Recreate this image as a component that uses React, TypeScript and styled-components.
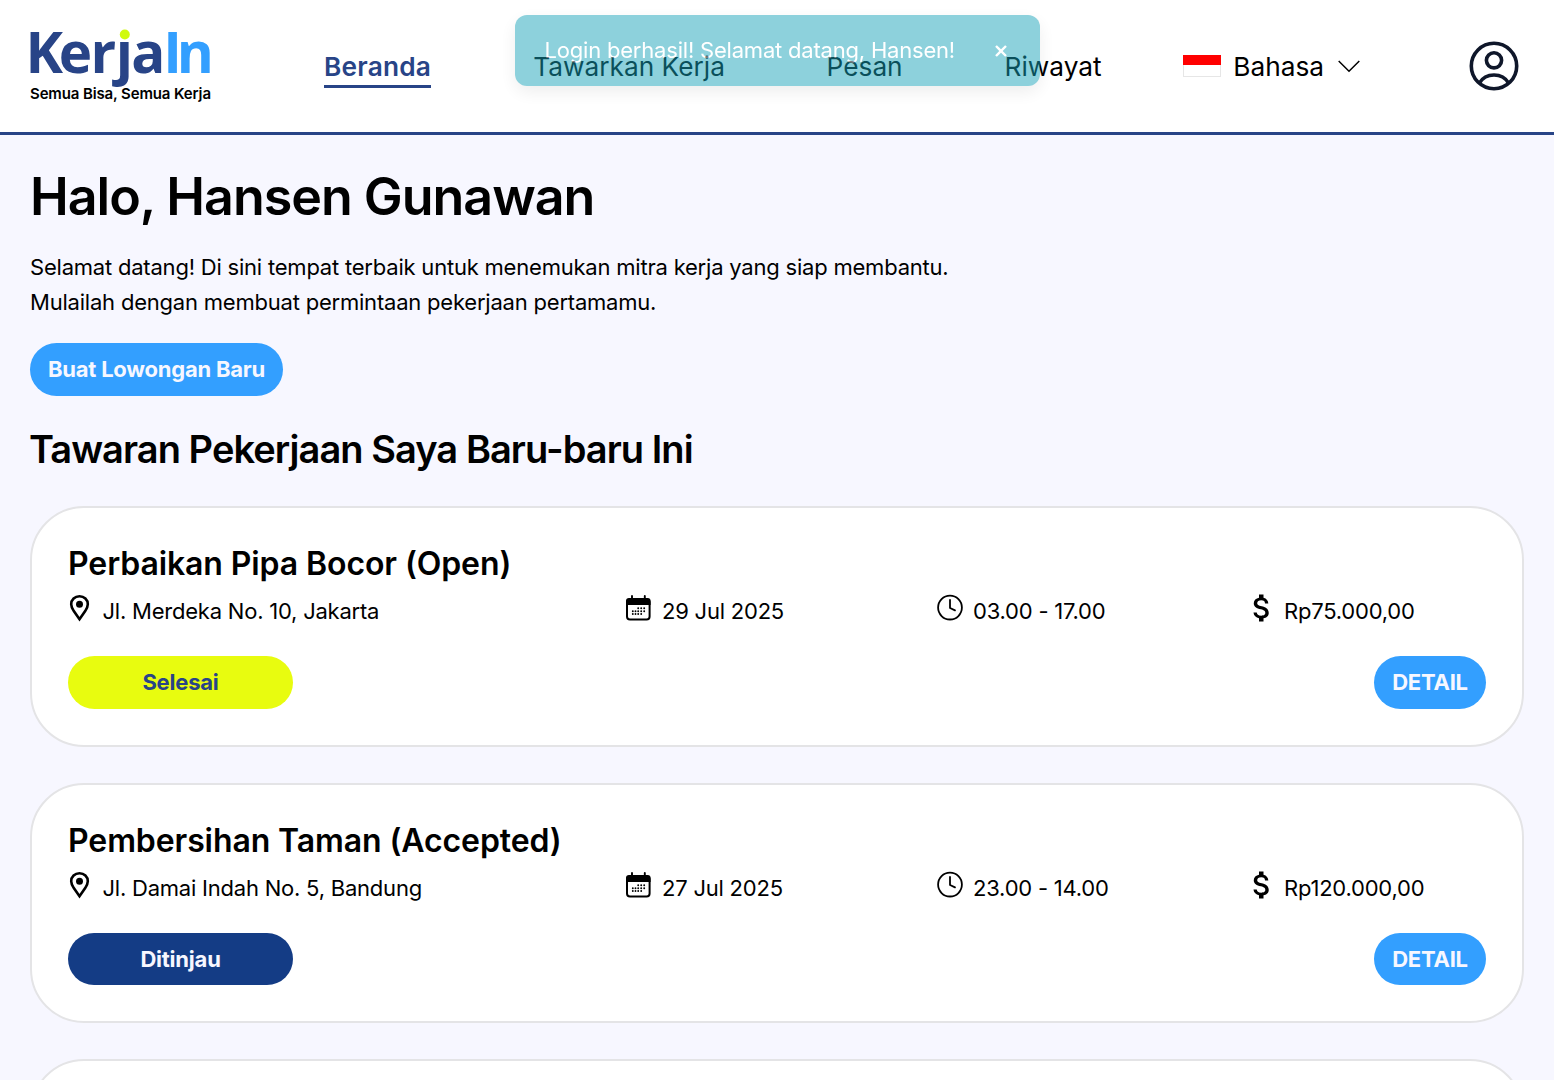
import React from "react";
import styled, { createGlobalStyle } from "styled-components";
import { MdAttachMoney } from "react-icons/md";

const GlobalStyle = createGlobalStyle`
  *, *::before, *::after { box-sizing: border-box; }
  html, body { margin: 0; padding: 0; }
  body {
    height: 1080px;
    overflow: hidden;
    background: #f7f7ff;
    color: #000;
    font-family: Inter, sans-serif;
  }
  h1, h2, h3, p { margin: 0; }
  button { border: 0; cursor: pointer; font-family: inherit; }
`;

const Page = styled.div`
  height: 1080px;
  overflow: hidden;
  background: #f7f7ff;
`;

const Header = styled.header`
  display: flex;
  align-items: center;
  height: 135px;
  padding: 0 35px 0 20px;
  background: #fff;
  border-bottom: 3px solid #284487;
`;

const Logo = styled.svg`
  display: block;
  flex: none;
  width: 202px;
  height: 110px;
  margin-right: 102px;
`;

const Nav = styled.nav`
  display: flex;
  gap: 102.3px;
`;

const NavLink = styled.a<{ $active?: boolean; $width: number }>`
  width: ${(p) => p.$width}px;
  height: 43px;
  margin-top: 1px;
  font-size: 26.25px;
  line-height: 44px;
  letter-spacing: ${(p) => (p.$active ? "0.22px" : "0")};
  white-space: nowrap;
  font-weight: ${(p) => (p.$active ? 600 : 400)};
  color: ${(p) => (p.$active ? "#284487" : "#000")};
  border-bottom: 3px solid ${(p) => (p.$active ? "#284487" : "transparent")};
`;

const Language = styled.div`
  display: flex;
  align-items: center;
  margin-left: 81px;
  font-size: 26.25px;
`;

const Flag = styled.span`
  width: 38px;
  height: 22px;
  margin-right: 12px;
  border: solid #e6e6e6;
  border-width: 0 1px 1px;
  border-image: linear-gradient(#f00 50%, #e6e6e6 50%) 1;
  background: linear-gradient(#f00 50%, #fff 50%);
`;

const Chevron = styled.svg`
  width: 22px;
  height: 13px;
  margin-left: 14px;
`;

const Avatar = styled.svg`
  width: 50px;
  height: 50px;
  margin-left: auto;
`;

const Toast = styled.div`
  position: fixed;
  top: 15px;
  left: 515px;
  display: flex;
  justify-content: space-between;
  align-items: center;
  width: 525px;
  height: 71px;
  padding: 0 31px 0 29.5px;
  border-radius: 12px;
  background: #17a2b8;
  box-shadow: 0 6px 18px rgba(0, 0, 0, 0.15);
  color: #fff;
  font-size: 22px;
  letter-spacing: -0.2px;
  white-space: nowrap;
  opacity: 0.49;
`;

const ToastText = styled.span`
  padding-bottom: 2px;
`;

const CloseIcon = styled.svg`
  width: 16px;
  height: 16px;
`;

const Main = styled.main`
  display: flex;
  flex-direction: column;
  align-items: flex-start;
  padding: 26px 30px 0;
`;

const Greeting = styled.h1`
  height: 72px;
  font-size: 52px;
  line-height: 72px;
  font-weight: 600;
  letter-spacing: -1.03px;
  white-space: nowrap;
`;

const Intro = styled.p`
  margin-top: 17px;
  font-size: 22px;
  line-height: 35px;
  letter-spacing: -0.21px;
  white-space: nowrap;
`;

const SectionTitle = styled.h2`
  height: 56px;
  margin: 25px 0 29.5px;
  font-size: 38px;
  line-height: 56px;
  font-weight: 600;
  letter-spacing: -0.94px;
  text-indent: -1px;
  white-space: nowrap;
`;

const Button = styled.button<{ $width: number; $bg?: string; $fg?: string }>`
  width: ${(p) => p.$width}px;
  height: 52.5px;
  padding: 0;
  border-radius: 27px;
  background: ${(p) => p.$bg ?? "#339fff"};
  color: ${(p) => p.$fg ?? "#f7f7ff"};
  font-size: 22px;
  font-weight: 700;
  letter-spacing: -0.22px;
  white-space: nowrap;
`;

const CreateButton = styled(Button)`
  margin-top: 23px;
`;

const CardList = styled.section`
  display: flex;
  flex-direction: column;
  align-self: stretch;
  gap: 36px;
`;

const Card = styled.article`
  height: 240.5px;
  padding: 36px;
  border: 2px solid #e4e4e6;
  border-radius: 54px;
  background: #fff;
`;

const CardTitle = styled.h3`
  height: 41px;
  font-size: 32px;
  line-height: 40px;
  font-weight: 600;
  letter-spacing: -0.1px;
  white-space: nowrap;
`;

const MetaRow = styled.div`
  display: grid;
  grid-template-columns: 557px 312px 314px 1fr;
  height: 47px;
  padding-top: 8px;
`;

const MetaItem = styled.div<{ $gap?: number }>`
  display: flex;
  gap: ${(p) => p.$gap ?? 10}px;
  height: 34px;
  font-size: 22px;
  line-height: 37.8px;
  letter-spacing: -0.22px;
  white-space: nowrap;
`;

const MetaIcon = styled.svg<{ $width?: number }>`
  flex: none;
  width: ${(p) => p.$width ?? 27}px;
  height: 28px;
  margin-top: 1.4px;
`;

const MoneyBox = styled.span`
  display: flex;
  justify-content: center;
  width: 22px;
  margin-top: -3px;
  height: 36px;
  svg { flex: none; width: 36px; height: 36px; }
`;

const CardActions = styled.div`
  display: flex;
  justify-content: space-between;
  margin-top: 24px;
`;

function PinIcon() {
  return (
    <MetaIcon $width={24} viewBox="0 0 24 28">
      <path d="M11.5 2.2c-4.7 0-8.3 3.4-8.3 8 0 2.7 1.2 4.7 2.6 6.9l5.7 8.2 5.7-8.2c1.4-2.2 2.6-4.2 2.6-6.9 0-4.6-3.6-8-8.3-8Z" fill="none" stroke="#000" strokeWidth="2.6" />
      <circle cx="11.5" cy="10.2" r="3.5" />
    </MetaIcon>
  );
}

const calendarDots = [
  [13.2, 14.3], [16.2, 14.3], [19.2, 14.3],
  [7.8, 17.2], [10.5, 17.2], [13.2, 17.2], [16.2, 17.2], [19.2, 17.2],
  [7.8, 20], [10.5, 20], [13.2, 20], [16.2, 20],
];

function CalendarIcon() {
  return (
    <MetaIcon viewBox="0 0 27 28">
      <rect x="2" y="5.5" width="22.6" height="20" rx="3" fill="none" stroke="#000" strokeWidth="2" />
      <path d="M1 11V6.9a3 3 0 0 1 3-3h18.6a3 3 0 0 1 3 3V11Z" />
      <path d="M7 2v3.5M19.8 2v3.5" stroke="#000" strokeWidth="1.9" strokeLinecap="round" />
      {calendarDots.map(([x, y]) => <circle key={`${x}-${y}`} cx={x} cy={y} r="0.95" />)}
    </MetaIcon>
  );
}

function ClockIcon() {
  return (
    <MetaIcon viewBox="0 0 27 28">
      <circle cx="13" cy="13.6" r="11.9" fill="none" stroke="#000" strokeWidth="1.8" />
      <path d="M13 6v8l5 2.4" fill="none" stroke="#000" strokeWidth="1.8" strokeLinecap="round" strokeLinejoin="round" />
    </MetaIcon>
  );
}

interface Job {
  title: string;
  place: string;
  date: string;
  time: string;
  price: string;
  status: string;
  bg: string;
  fg: string;
}

const jobs: Job[] = [
  { title: "Perbaikan Pipa Bocor (Open)", place: "Jl. Merdeka No. 10, Jakarta", date: "29 Jul 2025", time: "03.00 - 17.00", price: "Rp75.000,00", status: "Selesai", bg: "#e8fc0f", fg: "#284487" },
  { title: "Pembersihan Taman (Accepted)", place: "Jl. Damai Indah No. 5, Bandung", date: "27 Jul 2025", time: "23.00 - 14.00", price: "Rp120.000,00", status: "Ditinjau", bg: "#143c85", fg: "#f7f7ff" },
];

function JobCard({ job }: { job: Job }) {
  return (
    <Card>
      <CardTitle>{job.title}</CardTitle>
      <MetaRow>
        <MetaItem $gap={10.5}><PinIcon />{job.place}</MetaItem>
        <MetaItem><CalendarIcon />{job.date}</MetaItem>
        <MetaItem $gap={9}><ClockIcon />{job.time}</MetaItem>
        <MetaItem $gap={11}><MoneyBox><MdAttachMoney /></MoneyBox>{job.price}</MetaItem>
      </MetaRow>
      <CardActions>
        <Button $width={225} $bg={job.bg} $fg={job.fg}>{job.status}</Button>
        <Button $width={112}>DETAIL</Button>
      </CardActions>
    </Card>
  );
}

export default function App() {
  return (
    <Page>
      <GlobalStyle />
      <Header>
        <Logo viewBox="-10 -15 202 110">
          {/* The j keeps its stem only; its dot is the lime circle. */}
          <clipPath id="stem">
            <path clipRule="evenodd" d="M-10-15H192V95H-10ZM86-2V14.8H104V-2Z" />
          </clipPath>
          <g fontFamily="'Open Sans'" fontWeight="700" fontSize="56.5">
            <text x="-4.6 28.8 60.4 85.8 101.2" y="47.3" fill="#284487" clipPath="url(#stem)">Kerja</text>
            <text x="133.3 146.8" y="47.3" fill="#339fff">In</text>
          </g>
          <circle cx="94.8" cy="8.5" r="5" fill="#d0fa0c" />
          <text x="0" y="73" fontFamily="Inter" fontWeight="600" fontSize="15" textLength="181">Semua Bisa, Semua Kerja</text>
        </Logo>
        <Nav>
          <NavLink $active $width={107}>Beranda</NavLink>
          <NavLink $width={191}>Tawarkan Kerja</NavLink>
          <NavLink $width={75.7}>Pesan</NavLink>
          <NavLink $width={97.7}>Riwayat</NavLink>
        </Nav>
        <Language>
          <Flag />
          Bahasa
          <Chevron viewBox="0 0 22 13" fill="none" stroke="#000" strokeWidth="1.5">
            <path d="M.7 1 11 11.3 21.3 1" />
          </Chevron>
        </Language>
        <Avatar viewBox="0 0 50 50" fill="none" stroke="#0f172a" strokeWidth="3.6">
          <circle cx="25" cy="25" r="22.7" />
          <circle cx="25" cy="19.3" r="7.6" />
          <path d="M10.5 42c3-5.2 8.5-8 14.5-8s11.5 2.8 14.5 8" />
        </Avatar>
      </Header>
      <Main>
        <Greeting>Halo, Hansen Gunawan</Greeting>
        <Intro>
          Selamat datang! Di sini tempat terbaik untuk menemukan mitra kerja yang siap membantu.
          <br />
          Mulailah dengan membuat permintaan pekerjaan pertamamu.
        </Intro>
        <CreateButton $width={253}>Buat Lowongan Baru</CreateButton>
        <SectionTitle>Tawaran Pekerjaan Saya Baru-baru Ini</SectionTitle>
        <CardList>
          {jobs.map((job) => <JobCard key={job.title} job={job} />)}
          <Card />
        </CardList>
      </Main>
      <Toast>
        <ToastText>Login berhasil! Selamat datang, Hansen!</ToastText>
        <CloseIcon viewBox="0 0 16 16" stroke="#fff" strokeWidth="2.4">
          <path d="M3 3l10 10M13 3 3 13" />
        </CloseIcon>
      </Toast>
    </Page>
  );
}
